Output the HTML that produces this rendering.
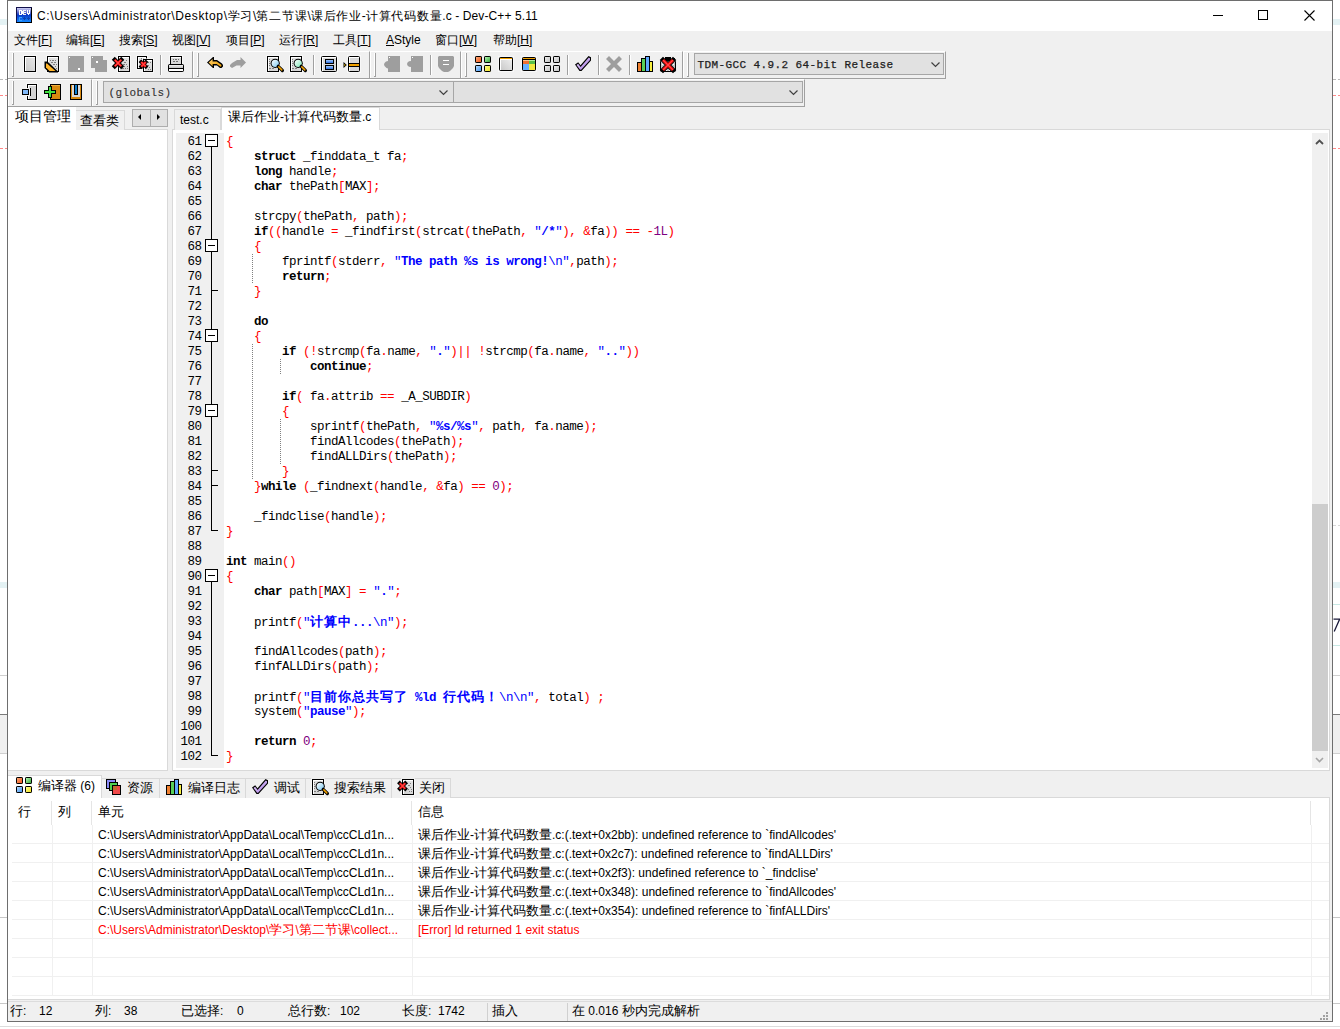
<!DOCTYPE html><html><head><meta charset="utf-8"><style>

*{margin:0;padding:0;box-sizing:border-box}
html,body{width:1340px;height:1029px;overflow:hidden;background:#fff}
body{position:relative;font-family:"Liberation Sans",sans-serif;font-size:12px;color:#000}
.t{position:absolute;white-space:pre;line-height:16px}
.ab{position:absolute}
.code{position:absolute;left:226px;white-space:pre;font-family:"Liberation Mono",monospace;font-size:12.5px;letter-spacing:-0.5px;line-height:17px;height:17px;color:#000}
.ln{position:absolute;left:176px;width:25.5px;text-align:right;white-space:pre;font-family:"Liberation Mono",monospace;font-size:12.5px;letter-spacing:-0.5px;line-height:17px;height:17px;color:#000}
.k{font-weight:bold}
.s{color:#ff0000}
.q{color:#0000ff;font-weight:bold}
.e{color:#0000ff}
.n{color:#800080}
.cj{font-size:13px;letter-spacing:1px}
.c13{font-size:13px}
.c135{font-size:13.5px}
.c12{font-size:12px}
.c125{font-size:12px;letter-spacing:0.75px}
svg{position:absolute;overflow:visible}

</style></head><body>
<div style="position:absolute;left:0px;top:19px;width:7px;height:6px;background:#e4f2f4"></div>
<div style="position:absolute;left:0px;top:79px;width:7px;height:1px;background:repeating-linear-gradient(90deg,#b8b8b8 0 3px,transparent 3px 5px)"></div>
<div style="position:absolute;left:0px;top:95px;width:7px;height:1px;background:repeating-linear-gradient(90deg,#ff8888 0 3px,transparent 3px 5px)"></div>
<div style="position:absolute;left:0px;top:148px;width:7px;height:1px;background:repeating-linear-gradient(90deg,#ff8888 0 3px,transparent 3px 5px)"></div>
<div style="position:absolute;left:0px;top:582px;width:7px;height:6px;background:#e4f2f4"></div>
<div style="position:absolute;left:0px;top:675px;width:7px;height:1px;background:#d0d0d0"></div>
<div style="position:absolute;left:0px;top:714px;width:7px;height:1px;background:#7a7a7a"></div>
<div style="position:absolute;left:0px;top:715px;width:7px;height:38px;background:#f0f0f0"></div>
<div style="position:absolute;left:0px;top:753px;width:7px;height:1px;background:#d0d0d0"></div>
<div style="position:absolute;left:0px;top:917px;width:7px;height:1px;background:#c8c8c8"></div>
<div style="position:absolute;left:0px;top:1003px;width:7px;height:1px;background:#c8c8c8"></div>
<div style="position:absolute;left:1333px;top:19px;width:7px;height:6px;background:#e4f2f4"></div>
<div style="position:absolute;left:1333px;top:79px;width:7px;height:1px;background:repeating-linear-gradient(90deg,#b8b8b8 0 3px,transparent 3px 5px)"></div>
<div style="position:absolute;left:1333px;top:95px;width:7px;height:1px;background:repeating-linear-gradient(90deg,#ff8888 0 3px,transparent 3px 5px)"></div>
<div style="position:absolute;left:1333px;top:148px;width:7px;height:1px;background:repeating-linear-gradient(90deg,#ff8888 0 3px,transparent 3px 5px)"></div>
<div style="position:absolute;left:1333px;top:582px;width:7px;height:6px;background:#e4f2f4"></div>
<div style="position:absolute;left:1333px;top:675px;width:7px;height:1px;background:#d0d0d0"></div>
<div style="position:absolute;left:1333px;top:714px;width:7px;height:1px;background:#7a7a7a"></div>
<div style="position:absolute;left:1333px;top:715px;width:7px;height:38px;background:#f0f0f0"></div>
<div style="position:absolute;left:1333px;top:753px;width:7px;height:1px;background:#d0d0d0"></div>
<div style="position:absolute;left:1333px;top:917px;width:7px;height:1px;background:#c8c8c8"></div>
<div style="position:absolute;left:1333px;top:1003px;width:7px;height:1px;background:#c8c8c8"></div>
<div style="position:absolute;left:1333px;top:525px;width:7px;height:1px;background:repeating-linear-gradient(90deg,#d8d8d8 0 3px,transparent 3px 5px)"></div>
<div style="position:absolute;left:1333px;top:604px;width:7px;height:1px;background:#c8e8e4"></div>
<div style="position:absolute;left:1333px;top:645px;width:7px;height:1px;background:#c8e8e4"></div>
<svg style="left:1333px;top:618px" width="7" height="14" viewBox="0 0 7 14"><path d="M0.5 1.2H6.6L1.2 13.5" fill="none" stroke="#1a1a3a" stroke-width="1.3"/></svg>
<div style="position:absolute;left:0px;top:1026px;width:1340px;height:1px;background:#dcdcdc"></div>
<div style="position:absolute;left:7px;top:0px;width:1326px;height:1022px;border:1px solid #6e6e6e;background:#f0f0f0"></div>
<div style="position:absolute;left:8px;top:1px;width:1324px;height:30px;background:#fff"></div>
<svg style="left:16px;top:7px" width="16" height="16" viewBox="0 0 16 16" shape-rendering="crispEdges">
<defs><linearGradient id="devg" x1="0" y1="0" x2="0" y2="1"><stop offset="0" stop-color="#d0d0f4"/><stop offset="0.35" stop-color="#5060c8"/><stop offset="0.5" stop-color="#0838c8"/><stop offset="1" stop-color="#1488ff"/></linearGradient></defs>
<rect x="0" y="0" width="16" height="16" fill="#10104a"/>
<rect x="1" y="1" width="14" height="14" fill="url(#devg)"/>
<rect x="15" y="1" width="1" height="15" fill="#000"/><rect x="0" y="15" width="16" height="1" fill="#000"/>
<path d="M3 3h3v1h1v3h-1v1h-3zM4 4v3h1v-3z" fill="#fff" fill-rule="evenodd"/>
<path d="M7 3h3v1h-2v1h2v1h-2v1h2v1h-3z" fill="#f0f0f8"/>
<path d="M11 3h1v3h1v-3h1v4h-1v1h-1v-1h-1z" fill="#fff"/>
<rect x="3" y="10" width="3" height="1" fill="#3aa0ff"/><rect x="3" y="11" width="1" height="3" fill="#3aa0ff"/><rect x="3" y="13" width="3" height="1" fill="#3aa0ff"/>
<rect x="7" y="11" width="3" height="1" fill="#0a40b0"/><rect x="8" y="10" width="1" height="3" fill="#0a40b0"/>
<rect x="11" y="11" width="3" height="1" fill="#0a40b0"/><rect x="12" y="10" width="1" height="3" fill="#0a40b0"/>
</svg>
<div class="t" style="left:37px;top:8px;font-size:12px;line-height:16px"><span style="letter-spacing:0.62px">C:\Users\Administrator\Desktop\</span><span class="c125">学习</span>\<span class="c125">第二节课</span>\<span class="c125">课后作业</span>-<span class="c125">计算代码数量</span><span style="letter-spacing:0.1px">.c - Dev-C++ 5.11</span></div>
<div style="position:absolute;left:1213px;top:15px;width:10px;height:1px;background:#000"></div>
<div style="position:absolute;left:1258px;top:10px;width:10px;height:10px;border:1px solid #000"></div>
<svg style="left:1304px;top:10px" width="11" height="11" viewBox="0 0 11 11"><path d="M0.5 0.5L10.5 10.5M10.5 0.5L0.5 10.5" stroke="#000" stroke-width="1.1"/></svg>
<div class="t" style="left:14px;top:32px;font-size:12px;line-height:16px">文件[<u>F</u>]</div>
<div class="t" style="left:66px;top:32px;font-size:12px;line-height:16px">编辑[<u>E</u>]</div>
<div class="t" style="left:119px;top:32px;font-size:12px;line-height:16px">搜索[<u>S</u>]</div>
<div class="t" style="left:172px;top:32px;font-size:12px;line-height:16px">视图[<u>V</u>]</div>
<div class="t" style="left:226px;top:32px;font-size:12px;line-height:16px">项目[<u>P</u>]</div>
<div class="t" style="left:279px;top:32px;font-size:12px;line-height:16px">运行[<u>R</u>]</div>
<div class="t" style="left:333px;top:32px;font-size:12px;line-height:16px">工具[<u>T</u>]</div>
<div class="t" style="left:386px;top:32px;font-size:12px;line-height:16px"><u>A</u>Style</div>
<div class="t" style="left:435px;top:32px;font-size:12px;line-height:16px">窗口[<u>W</u>]</div>
<div class="t" style="left:493px;top:32px;font-size:12px;line-height:16px">帮助[<u>H</u>]</div>
<div style="position:absolute;left:8px;top:51px;width:185px;height:28px;background:#f0f0f0;border-top:1px solid #fff;border-left:1px solid #fff;border-right:1px solid #a0a0a0;border-bottom:1px solid #a0a0a0"></div><div style="position:absolute;left:12px;top:53px;width:1px;height:24px;background:#fff"></div><div style="position:absolute;left:13px;top:53px;width:1px;height:24px;background:#a0a0a0"></div><div style="position:absolute;left:12px;top:76px;width:2px;height:1px;background:#a0a0a0"></div>
<div style="position:absolute;left:193px;top:51px;width:177px;height:28px;background:#f0f0f0;border-top:1px solid #fff;border-left:1px solid #fff;border-right:1px solid #a0a0a0;border-bottom:1px solid #a0a0a0"></div><div style="position:absolute;left:197px;top:53px;width:1px;height:24px;background:#fff"></div><div style="position:absolute;left:198px;top:53px;width:1px;height:24px;background:#a0a0a0"></div><div style="position:absolute;left:197px;top:76px;width:2px;height:1px;background:#a0a0a0"></div>
<div style="position:absolute;left:370px;top:51px;width:91px;height:28px;background:#f0f0f0;border-top:1px solid #fff;border-left:1px solid #fff;border-right:1px solid #a0a0a0;border-bottom:1px solid #a0a0a0"></div><div style="position:absolute;left:374px;top:53px;width:1px;height:24px;background:#fff"></div><div style="position:absolute;left:375px;top:53px;width:1px;height:24px;background:#a0a0a0"></div><div style="position:absolute;left:374px;top:76px;width:2px;height:1px;background:#a0a0a0"></div>
<div style="position:absolute;left:461px;top:51px;width:222px;height:28px;background:#f0f0f0;border-top:1px solid #fff;border-left:1px solid #fff;border-right:1px solid #a0a0a0;border-bottom:1px solid #a0a0a0"></div><div style="position:absolute;left:465px;top:53px;width:1px;height:24px;background:#fff"></div><div style="position:absolute;left:466px;top:53px;width:1px;height:24px;background:#a0a0a0"></div><div style="position:absolute;left:465px;top:76px;width:2px;height:1px;background:#a0a0a0"></div>
<div style="position:absolute;left:683px;top:51px;width:263px;height:28px;background:#f0f0f0;border-top:1px solid #fff;border-left:1px solid #fff;border-right:1px solid #a0a0a0;border-bottom:1px solid #a0a0a0"></div><div style="position:absolute;left:687px;top:53px;width:1px;height:24px;background:#fff"></div><div style="position:absolute;left:688px;top:53px;width:1px;height:24px;background:#a0a0a0"></div><div style="position:absolute;left:687px;top:76px;width:2px;height:1px;background:#a0a0a0"></div>
<div style="position:absolute;left:8px;top:79px;width:84px;height:28px;background:#f0f0f0;border-top:1px solid #fff;border-left:1px solid #fff;border-right:1px solid #a0a0a0;border-bottom:1px solid #a0a0a0"></div><div style="position:absolute;left:12px;top:81px;width:1px;height:24px;background:#fff"></div><div style="position:absolute;left:13px;top:81px;width:1px;height:24px;background:#a0a0a0"></div><div style="position:absolute;left:12px;top:104px;width:2px;height:1px;background:#a0a0a0"></div>
<div style="position:absolute;left:92px;top:79px;width:713px;height:28px;background:#f0f0f0;border-top:1px solid #fff;border-left:1px solid #fff;border-right:1px solid #a0a0a0;border-bottom:1px solid #a0a0a0"></div><div style="position:absolute;left:96px;top:81px;width:1px;height:24px;background:#fff"></div><div style="position:absolute;left:97px;top:81px;width:1px;height:24px;background:#a0a0a0"></div><div style="position:absolute;left:96px;top:104px;width:2px;height:1px;background:#a0a0a0"></div>
<div style="position:absolute;left:8px;top:78px;width:938px;height:1px;background:#a0a0a0"></div>
<div style="position:absolute;left:8px;top:106px;width:797px;height:1px;background:#a0a0a0"></div>
<div style="position:absolute;left:160px;top:55px;width:1px;height:20px;background:#a0a0a0"></div>
<div style="position:absolute;left:161px;top:55px;width:1px;height:20px;background:#fff"></div>
<div style="position:absolute;left:313px;top:55px;width:1px;height:20px;background:#a0a0a0"></div>
<div style="position:absolute;left:314px;top:55px;width:1px;height:20px;background:#fff"></div>
<div style="position:absolute;left:430px;top:55px;width:1px;height:20px;background:#a0a0a0"></div>
<div style="position:absolute;left:431px;top:55px;width:1px;height:20px;background:#fff"></div>
<div style="position:absolute;left:567px;top:55px;width:1px;height:20px;background:#a0a0a0"></div>
<div style="position:absolute;left:568px;top:55px;width:1px;height:20px;background:#fff"></div>
<div style="position:absolute;left:598px;top:55px;width:1px;height:20px;background:#a0a0a0"></div>
<div style="position:absolute;left:599px;top:55px;width:1px;height:20px;background:#fff"></div>
<div style="position:absolute;left:629px;top:55px;width:1px;height:20px;background:#a0a0a0"></div>
<div style="position:absolute;left:630px;top:55px;width:1px;height:20px;background:#fff"></div>
<svg style="left:24px;top:56px" width="12" height="16" viewBox="0 0 12 16" shape-rendering="crispEdges"><defs><linearGradient id="g1" x1="0" y1="1" x2="1" y2="0"><stop offset="0" stop-color="#c8c8c8"/><stop offset="1" stop-color="#e8e8e8"/></linearGradient></defs><rect x="-1" y="-1" width="14" height="18" fill="#fff" opacity="0.55"/><rect x="0" y="0" width="12" height="16" fill="#000" /><rect x="1" y="1" width="10" height="14" fill="url(#g1)" /><rect x="1" y="1" width="10" height="1" fill="#fff" /><rect x="1" y="1" width="1" height="14" fill="#fff" /></svg>
<svg style="left:45px;top:56px" width="14" height="16" viewBox="0 0 14 16" shape-rendering="crispEdges"><defs><linearGradient id="g2" x1="0" y1="1" x2="1" y2="0"><stop offset="0" stop-color="#cfcfcf"/><stop offset="1" stop-color="#e6e6e6"/></linearGradient></defs><rect x="1" y="-1" width="14" height="18" fill="#fff" opacity="0.55"/><rect x="2" y="0" width="12" height="16" fill="#000" /><rect x="3" y="1" width="10" height="14" fill="url(#g2)" /><rect x="3" y="1" width="10" height="1" fill="#fff" /><rect x="3" y="1" width="1" height="14" fill="#fff" /><rect x="5" y="4" width="1" height="1" fill="#606060" opacity="0.75"/><rect x="7" y="4" width="2" height="1" fill="#606060" opacity="0.75"/><rect x="10" y="4" width="1" height="1" fill="#606060" opacity="0.75"/><rect x="6" y="6" width="2" height="1" fill="#606060" opacity="0.75"/><rect x="9" y="6" width="2" height="1" fill="#606060" opacity="0.75"/><rect x="8" y="8" width="2" height="1" fill="#606060" opacity="0.75"/><rect x="11" y="8" width="1" height="1" fill="#606060" opacity="0.75"/><rect x="10" y="10" width="1" height="1" fill="#606060" opacity="0.75"/><rect x="11" y="12" width="1" height="1" fill="#606060" opacity="0.75"/><path d="M-0.5 5.5L2.5 5.5L13 15.5L13 16.5L4 16.5L-0.5 12Z" fill="#000" shape-rendering="auto"/><path d="M1 7.5L2 7.5L10.5 15L4.5 15L1 11.5Z" fill="#ffb428" shape-rendering="auto"/></svg>
<svg style="left:68px;top:56px" width="16" height="16" viewBox="0 0 16 16" shape-rendering="crispEdges"><rect x="0" y="0" width="16" height="16" fill="#9e9e9e" /><rect x="1" y="1" width="1" height="1" fill="#fff" /><rect x="10" y="12" width="2" height="2" fill="#fff" /></svg>
<svg style="left:91px;top:56px" width="16" height="16" viewBox="0 0 16 16" shape-rendering="crispEdges"><rect x="0" y="0" width="12" height="12" fill="#9e9e9e" /><rect x="4" y="4" width="12" height="12" fill="#9e9e9e" /><rect x="1" y="1" width="1" height="1" fill="#fff" /><rect x="5" y="5" width="2" height="2" fill="#fff" /></svg>
<svg style="left:113px;top:56px" width="17" height="16" viewBox="0 0 17 16" shape-rendering="crispEdges"><defs><linearGradient id="g3" x1="0" y1="1" x2="1" y2="0"><stop offset="0" stop-color="#cfcfcf"/><stop offset="1" stop-color="#e6e6e6"/></linearGradient></defs><rect x="4" y="-1" width="14" height="18" fill="#fff" opacity="0.55"/><rect x="5" y="0" width="12" height="16" fill="#000" /><rect x="6" y="1" width="10" height="14" fill="url(#g3)" /><rect x="6" y="1" width="10" height="1" fill="#fff" /><rect x="6" y="1" width="1" height="14" fill="#fff" /><rect x="10" y="4" width="1" height="1" fill="#606060" opacity="0.75"/><rect x="13" y="4" width="1" height="1" fill="#606060" opacity="0.75"/><rect x="11" y="6" width="2" height="1" fill="#606060" opacity="0.75"/><rect x="10" y="8" width="2" height="1" fill="#606060" opacity="0.75"/><rect x="13" y="8" width="1" height="1" fill="#606060" opacity="0.75"/><rect x="11" y="10" width="1" height="1" fill="#606060" opacity="0.75"/><rect x="14" y="10" width="1" height="1" fill="#606060" opacity="0.75"/><rect x="9" y="12" width="2" height="1" fill="#606060" opacity="0.75"/><rect x="12" y="12" width="1" height="1" fill="#606060" opacity="0.75"/><rect x="14" y="12" width="1" height="1" fill="#606060" opacity="0.75"/><path d="M1.75 3.75L8.25 10.25M8.25 3.75L1.75 10.25" stroke="#000" stroke-width="4.2" stroke-linecap="square" shape-rendering="auto"/><path d="M1.75 3.75L8.25 10.25M8.25 3.75L1.75 10.25" stroke="#ff1818" stroke-width="2.4" shape-rendering="auto"/><path d="M1.75 3.75L8.25 10.25M8.25 3.75L1.75 10.25" stroke="#ff9090" stroke-width="0.7" opacity="0.6" shape-rendering="auto"/></svg>
<svg style="left:137px;top:56px" width="16" height="16" viewBox="0 0 16 16" shape-rendering="crispEdges"><defs><linearGradient id="g4" x1="0" y1="1" x2="1" y2="0"><stop offset="0" stop-color="#cfcfcf"/><stop offset="1" stop-color="#e6e6e6"/></linearGradient></defs><rect x="-1" y="-1" width="12" height="15" fill="#fff" opacity="0.55"/><rect x="0" y="0" width="10" height="13" fill="#000" /><rect x="1" y="1" width="8" height="11" fill="url(#g4)" /><rect x="1" y="1" width="8" height="1" fill="#fff" /><rect x="1" y="1" width="1" height="11" fill="#fff" /><rect x="4" y="2" width="1" height="1" fill="#606060" opacity="0.75"/><rect x="6" y="2" width="1" height="1" fill="#606060" opacity="0.75"/><rect x="2" y="6" width="1" height="1" fill="#606060" opacity="0.75"/><rect x="3" y="9" width="1" height="1" fill="#606060" opacity="0.75"/><defs><linearGradient id="g5" x1="0" y1="1" x2="1" y2="0"><stop offset="0" stop-color="#cfcfcf"/><stop offset="1" stop-color="#e6e6e6"/></linearGradient></defs><rect x="5" y="2" width="12" height="15" fill="#fff" opacity="0.55"/><rect x="6" y="3" width="10" height="13" fill="#000" /><rect x="7" y="4" width="8" height="11" fill="url(#g5)" /><rect x="7" y="4" width="8" height="1" fill="#fff" /><rect x="7" y="4" width="1" height="11" fill="#fff" /><rect x="11" y="6" width="1" height="1" fill="#606060" opacity="0.75"/><rect x="13" y="6" width="1" height="1" fill="#606060" opacity="0.75"/><rect x="10" y="9" width="2" height="1" fill="#606060" opacity="0.75"/><rect x="12" y="11" width="1" height="1" fill="#606060" opacity="0.75"/><rect x="11" y="13" width="1" height="1" fill="#606060" opacity="0.75"/><rect x="13" y="13" width="1" height="1" fill="#606060" opacity="0.75"/><path d="M4.2 6.000000000000001L8.8 10.600000000000001M8.8 6.000000000000001L4.2 10.600000000000001" stroke="#000" stroke-width="3.6" stroke-linecap="square" shape-rendering="auto"/><path d="M4.2 6.000000000000001L8.8 10.600000000000001M8.8 6.000000000000001L4.2 10.600000000000001" stroke="#ff1818" stroke-width="2.4" shape-rendering="auto"/><path d="M4.2 6.000000000000001L8.8 10.600000000000001M8.8 6.000000000000001L4.2 10.600000000000001" stroke="#ff9090" stroke-width="0.7" opacity="0.6" shape-rendering="auto"/></svg>
<svg style="left:168px;top:56px" width="16" height="16" viewBox="0 0 16 16" shape-rendering="crispEdges"><defs><linearGradient id="g6" x1="0" y1="1" x2="0" y2="0"><stop offset="0" stop-color="#c0c0c0"/><stop offset="1" stop-color="#f0f0f0"/></linearGradient></defs><rect x="1" y="-1" width="14" height="11" fill="#fff" opacity="0.55"/><rect x="2" y="0" width="12" height="9" fill="#000" /><rect x="3" y="1" width="10" height="8" fill="#d8d8d8" /><rect x="3" y="1" width="10" height="1" fill="#fff" /><rect x="5" y="3" width="1" height="1" fill="#707070" /><rect x="7" y="3" width="2" height="1" fill="#707070" /><rect x="10" y="3" width="1" height="1" fill="#707070" /><rect x="5" y="5" width="2" height="1" fill="#707070" /><rect x="8" y="5" width="2" height="1" fill="#707070" /><rect x="0.5" y="8.5" width="15" height="7" rx="1" fill="#000" stroke="#000" shape-rendering="auto"/><rect x="1" y="9" width="14" height="3" fill="url(#g6)" /><rect x="1" y="13" width="14" height="2" fill="#fff" /></svg>
<svg style="left:207px;top:57px" width="17" height="12" viewBox="0 0 17 12" shape-rendering="crispEdges"><defs><linearGradient id="g7" x1="0" y1="0" x2="1" y2="1"><stop offset="0" stop-color="#ffd070"/><stop offset="1" stop-color="#f0a000"/></linearGradient></defs><path d="M0 5.5L6 0L7 0L7 3L10 3L15 6.5L16 8L16 9.5L14.5 11L13 11L10 8.5L7 8.5L7 11L6 11Z" fill="#000" shape-rendering="auto"/><path d="M1.6 5.5L5.6 2L5.6 4.5L9.6 4.5L14.2 7.8L14.5 9L13.6 9.7L9.6 7L5.6 7L5.6 9.3Z" fill="url(#g7)" shape-rendering="auto"/></svg>
<svg style="left:230px;top:57px" width="16" height="12" viewBox="0 0 16 12" shape-rendering="crispEdges"><path d="M16 5.5L10.5 0L10.5 3L7 3L2 6L0 8L0 9.5L2 11L6.5 8.5L10.5 8.5L10.5 11Z" fill="#9e9e9e" shape-rendering="auto"/></svg>
<svg style="left:267px;top:56px" width="17" height="16" viewBox="0 0 17 16" shape-rendering="crispEdges"><defs><linearGradient id="g8" x1="0" y1="1" x2="1" y2="0"><stop offset="0" stop-color="#cfcfcf"/><stop offset="1" stop-color="#e6e6e6"/></linearGradient></defs><rect x="-1" y="-1" width="14" height="18" fill="#fff" opacity="0.55"/><rect x="0" y="0" width="12" height="16" fill="#000" /><rect x="1" y="1" width="10" height="14" fill="url(#g8)" /><rect x="1" y="1" width="10" height="1" fill="#fff" /><rect x="1" y="1" width="1" height="14" fill="#fff" /><rect x="2" y="3" width="1" height="1" fill="#606060" opacity="0.75"/><rect x="2" y="5" width="1" height="1" fill="#606060" opacity="0.75"/><rect x="2" y="7" width="1" height="1" fill="#606060" opacity="0.75"/><rect x="2" y="9" width="1" height="1" fill="#606060" opacity="0.75"/><rect x="2" y="12" width="2" height="1" fill="#606060" opacity="0.75"/><rect x="5" y="12" width="2" height="1" fill="#606060" opacity="0.75"/><defs><linearGradient id="g9" x1="0" y1="0" x2="1" y2="1"><stop offset="0" stop-color="#ffffff"/><stop offset="1" stop-color="#7cc8f0"/></linearGradient></defs><circle cx="8.2" cy="7.3" r="4.6" fill="#000" shape-rendering="auto"/><circle cx="8.2" cy="7.3" r="3.6" fill="url(#g9)" shape-rendering="auto"/><path d="M11.2 10.3L15.399999999999999 14.5" stroke="#000" stroke-width="3.2" stroke-linecap="round" shape-rendering="auto"/><path d="M11.799999999999999 10.9L14.799999999999999 13.899999999999999" stroke="#f0a000" stroke-width="1.5" stroke-linecap="round" shape-rendering="auto"/></svg>
<svg style="left:290px;top:56px" width="17" height="16" viewBox="0 0 17 16" shape-rendering="crispEdges"><defs><linearGradient id="g10" x1="0" y1="1" x2="1" y2="0"><stop offset="0" stop-color="#cfcfcf"/><stop offset="1" stop-color="#e6e6e6"/></linearGradient></defs><rect x="-1" y="-1" width="14" height="18" fill="#fff" opacity="0.55"/><rect x="0" y="0" width="12" height="16" fill="#000" /><rect x="1" y="1" width="10" height="14" fill="url(#g10)" /><rect x="1" y="1" width="10" height="1" fill="#fff" /><rect x="1" y="1" width="1" height="14" fill="#fff" /><rect x="2" y="3" width="1" height="1" fill="#606060" opacity="0.75"/><rect x="2" y="5" width="1" height="1" fill="#606060" opacity="0.75"/><rect x="2" y="7" width="1" height="1" fill="#606060" opacity="0.75"/><rect x="2" y="9" width="1" height="1" fill="#606060" opacity="0.75"/><rect x="2" y="12" width="2" height="1" fill="#606060" opacity="0.75"/><rect x="5" y="12" width="2" height="1" fill="#606060" opacity="0.75"/><defs><linearGradient id="g11" x1="0" y1="0" x2="1" y2="1"><stop offset="0" stop-color="#ffffff"/><stop offset="1" stop-color="#7ce8b8"/></linearGradient></defs><circle cx="8.2" cy="7.3" r="4.6" fill="#000" shape-rendering="auto"/><circle cx="8.2" cy="7.3" r="3.6" fill="url(#g11)" shape-rendering="auto"/><path d="M11.2 10.3L15.399999999999999 14.5" stroke="#000" stroke-width="3.2" stroke-linecap="round" shape-rendering="auto"/><path d="M11.799999999999999 10.9L14.799999999999999 13.899999999999999" stroke="#f0a000" stroke-width="1.5" stroke-linecap="round" shape-rendering="auto"/></svg>
<svg style="left:321px;top:56px" width="16" height="16" viewBox="0 0 16 16" shape-rendering="crispEdges"><rect x="-1" y="-1" width="18" height="18" fill="#fff" opacity="0.55"/><defs><linearGradient id="g12" x1="0" y1="1" x2="0" y2="0"><stop offset="0" stop-color="#3070e0"/><stop offset="1" stop-color="#a0c8ff"/></linearGradient></defs><rect x="0.5" y="0.5" width="15" height="15" rx="1" fill="#d8d8d8" stroke="#000" shape-rendering="auto"/><rect x="1" y="1" width="14" height="1" fill="#fff" /><rect x="1" y="1" width="1" height="14" fill="#fff" /><rect x="4" y="3" width="9" height="5" fill="#000" /><rect x="5" y="4" width="7" height="3" fill="url(#g12)" /><rect x="4" y="9" width="9" height="5" fill="#000" /><rect x="5" y="10" width="7" height="3" fill="url(#g12)" /></svg>
<svg style="left:343px;top:56px" width="17" height="16" viewBox="0 0 17 16" shape-rendering="crispEdges"><rect x="4" y="-1" width="14" height="18" fill="#fff" opacity="0.55"/><rect x="5.5" y="0.5" width="11" height="15" rx="1" fill="#d8d8d8" stroke="#000" shape-rendering="auto"/><rect x="6" y="1" width="10" height="1" fill="#fff" /><rect x="6" y="1" width="1" height="14" fill="#fff" /><rect x="5" y="7" width="12" height="4" fill="#000" /><rect x="6" y="8" width="10" height="2" fill="#f0a000" /><path d="M0.5 6L3.8 9L0.5 12Z" fill="#000" shape-rendering="auto"/><path d="M1.3 7.8L2.6 9L1.3 10.2Z" fill="#f0c000" shape-rendering="auto"/></svg>
<svg style="left:384px;top:56px" width="16" height="16" viewBox="0 0 16 16" shape-rendering="crispEdges"><path d="M4 0L16 0L16 16L4 16L4 12.5L2.5 12L0.5 10L0 8.5L0.5 7L2 5.5L4 5Z" fill="#9e9e9e" shape-rendering="auto"/><rect x="5" y="1" width="1" height="1" fill="#fff" /></svg>
<svg style="left:407px;top:56px" width="16" height="16" viewBox="0 0 16 16" shape-rendering="crispEdges"><path d="M4 0L16 0L16 16L4 16L4 11L2 10.8L0.5 9.5L0 8L0.5 6.5L2 5.2L4 5Z" fill="#9e9e9e" shape-rendering="auto"/><rect x="5" y="1" width="1" height="1" fill="#fff" /></svg>
<svg style="left:438px;top:56px" width="16" height="16" viewBox="0 0 16 16" shape-rendering="crispEdges"><path d="M1 0L15 0L16 1L16 10L15 12L12 15L10 16L6 16L4 15L1 12L0 10L0 1Z" fill="#9e9e9e" shape-rendering="auto"/><rect x="5" y="4" width="6" height="1" fill="#fff" /><rect x="5" y="8" width="6" height="1" fill="#fff" /></svg>
<svg style="left:475px;top:56px" width="16" height="16" viewBox="0 0 16 16" shape-rendering="crispEdges"><defs><linearGradient id="g13" x1="0" y1="0" x2="1" y2="1"><stop offset="0" stop-color="#ffb080"/><stop offset="1" stop-color="#f05010"/></linearGradient></defs><rect x="0.5" y="0.5" width="6" height="6" rx="0.6" fill="url(#g13)" stroke="#000" stroke-width="1" shape-rendering="auto"/><defs><linearGradient id="g14" x1="0" y1="0" x2="1" y2="1"><stop offset="0" stop-color="#c0ffc0"/><stop offset="1" stop-color="#30a030"/></linearGradient></defs><rect x="9.5" y="0.5" width="6" height="6" rx="0.6" fill="url(#g14)" stroke="#000" stroke-width="1" shape-rendering="auto"/><defs><linearGradient id="g15" x1="0" y1="0" x2="1" y2="1"><stop offset="0" stop-color="#c0e0ff"/><stop offset="1" stop-color="#3890f0"/></linearGradient></defs><rect x="0.5" y="9.5" width="6" height="6" rx="0.6" fill="url(#g15)" stroke="#000" stroke-width="1" shape-rendering="auto"/><defs><linearGradient id="g16" x1="0" y1="0" x2="1" y2="1"><stop offset="0" stop-color="#ffff90"/><stop offset="1" stop-color="#f0e020"/></linearGradient></defs><rect x="9.5" y="9.5" width="6" height="6" rx="0.6" fill="url(#g16)" stroke="#000" stroke-width="1" shape-rendering="auto"/></svg>
<svg style="left:499px;top:57px" width="14" height="14" viewBox="0 0 14 14" shape-rendering="crispEdges"><rect x="-1" y="-1" width="16" height="16" fill="#fff" opacity="0.55"/><defs><linearGradient id="g17" x1="0" y1="1" x2="1" y2="0"><stop offset="0" stop-color="#c8c8c8"/><stop offset="1" stop-color="#eeeeee"/></linearGradient></defs><rect x="0.5" y="0.5" width="13" height="13" rx="1" fill="#000" stroke="#000" shape-rendering="auto"/><rect x="1" y="2" width="12" height="11" fill="url(#g17)" /><rect x="1" y="1" width="12" height="1" fill="#f0a000" /><rect x="1" y="2" width="12" height="1" fill="#fff" /><rect x="1" y="2" width="1" height="11" fill="#fff" /></svg>
<svg style="left:522px;top:57px" width="14" height="14" viewBox="0 0 14 14" shape-rendering="crispEdges"><rect x="-1" y="-1" width="16" height="16" fill="#fff" opacity="0.55"/><rect x="0.5" y="0.5" width="13" height="13" rx="1" fill="#000" stroke="#000" shape-rendering="auto"/><rect x="1" y="1" width="12" height="1" fill="#f0a000" /><rect x="1" y="3" width="6" height="4" fill="#f07030" /><rect x="7" y="3" width="6" height="4" fill="#58c048" /><rect x="1" y="7" width="6" height="6" fill="#68b0ff" /><rect x="7" y="7" width="6" height="6" fill="#f0e840" /><rect x="1" y="3" width="6" height="1" fill="#ffc090" /><rect x="7" y="3" width="6" height="1" fill="#b0f0a0" /></svg>
<svg style="left:544px;top:56px" width="16" height="16" viewBox="0 0 16 16" shape-rendering="crispEdges"><defs><linearGradient id="g18" x1="0" y1="0" x2="1" y2="1"><stop offset="0" stop-color="#f0f0f0"/><stop offset="1" stop-color="#c0c0c0"/></linearGradient></defs><rect x="0.5" y="0.5" width="6" height="6" rx="0.6" fill="url(#g18)" stroke="#000" stroke-width="1" shape-rendering="auto"/><defs><linearGradient id="g19" x1="0" y1="0" x2="1" y2="1"><stop offset="0" stop-color="#f0f0f0"/><stop offset="1" stop-color="#c0c0c0"/></linearGradient></defs><rect x="9.5" y="0.5" width="6" height="6" rx="0.6" fill="url(#g19)" stroke="#000" stroke-width="1" shape-rendering="auto"/><defs><linearGradient id="g20" x1="0" y1="0" x2="1" y2="1"><stop offset="0" stop-color="#f0f0f0"/><stop offset="1" stop-color="#c0c0c0"/></linearGradient></defs><rect x="0.5" y="9.5" width="6" height="6" rx="0.6" fill="url(#g20)" stroke="#000" stroke-width="1" shape-rendering="auto"/><defs><linearGradient id="g21" x1="0" y1="0" x2="1" y2="1"><stop offset="0" stop-color="#f0f0f0"/><stop offset="1" stop-color="#c0c0c0"/></linearGradient></defs><rect x="9.5" y="9.5" width="6" height="6" rx="0.6" fill="url(#g21)" stroke="#000" stroke-width="1" shape-rendering="auto"/></svg>
<svg style="left:575px;top:56px" width="16" height="16" viewBox="0 0 16 16" shape-rendering="crispEdges"><defs><linearGradient id="g22" x1="0" y1="0" x2="1" y2="1"><stop offset="0" stop-color="#f0e0ff"/><stop offset="1" stop-color="#a070e0"/></linearGradient></defs><path d="M0 8.5L3.2 6.3L5.5 9.3L13.5 0L16 1.3L16 4.5L6.5 15L4.5 15Z" fill="#000" shape-rendering="auto"/><path d="M1.5 8.9L3.1 7.8L5.6 11.1L13.8 1.5L15 2.2L15 4.1L6.1 13.8L5.1 13.8Z" fill="url(#g22)" shape-rendering="auto"/></svg>
<svg style="left:607px;top:57px" width="14" height="14" viewBox="0 0 14 14" shape-rendering="crispEdges"><path d="M2 2L12 12M12 2L2 12" stroke="#9e9e9e" stroke-width="4.2" stroke-linecap="square" shape-rendering="auto"/></svg>
<svg style="left:637px;top:56px" width="16" height="16" viewBox="0 0 16 16" shape-rendering="crispEdges"><rect x="0" y="6" width="5" height="10" fill="#000" /><rect x="1" y="7" width="3" height="8" fill="#f08030" /><rect x="4" y="2" width="5" height="14" fill="#000" /><rect x="5" y="3" width="3" height="12" fill="#58d058" /><rect x="8" y="0" width="5" height="16" fill="#000" /><rect x="9" y="1" width="3" height="14" fill="#60a8ff" /><rect x="12" y="5" width="4" height="11" fill="#000" /><rect x="13" y="6" width="2" height="9" fill="#f8f040" /></svg>
<svg style="left:660px;top:56px" width="16" height="16" viewBox="0 0 16 16" shape-rendering="crispEdges"><rect x="0.5" y="4.5" width="15" height="11" rx="1" fill="#c0c0c0" stroke="#000" shape-rendering="auto"/><rect x="5" y="1" width="6" height="4" fill="#000" /><rect x="12" y="2" width="3" height="3" fill="#000" /><rect x="2" y="8" width="1" height="1" fill="#fff" /><rect x="13" y="8" width="1" height="1" fill="#fff" /><rect x="6" y="14" width="1" height="1" fill="#fff" /><rect x="9" y="14" width="1" height="1" fill="#fff" /><path d="M3.0 4.0L13.0 14.0M13.0 4.0L3.0 14.0" stroke="#000" stroke-width="4.6" stroke-linecap="square" shape-rendering="auto"/><path d="M3.0 4.0L13.0 14.0M13.0 4.0L3.0 14.0" stroke="#ff1818" stroke-width="3.0" shape-rendering="auto"/><path d="M3.0 4.0L13.0 14.0M13.0 4.0L3.0 14.0" stroke="#ff9090" stroke-width="0.7" opacity="0.6" shape-rendering="auto"/></svg>
<svg style="left:22px;top:84px" width="15" height="16" viewBox="0 0 15 16" shape-rendering="crispEdges"><rect x="4" y="-1" width="12" height="18" fill="#fff" opacity="0.55"/><rect x="5" y="0" width="10" height="16" fill="#000" /><rect x="6" y="1" width="8" height="14" fill="#d4d4d4" /><rect x="6" y="1" width="8" height="1" fill="#fff" /><rect x="6" y="1" width="1" height="14" fill="#fff" /><rect x="5" y="4" width="3" height="8" fill="#f0f0f0" /><rect x="8" y="4" width="1" height="8" fill="#000" /><rect x="0" y="5" width="7" height="6" fill="#000" /><rect x="1" y="6" width="5" height="4" fill="#80b8f8" /></svg>
<svg style="left:45px;top:84px" width="16" height="16" viewBox="0 0 16 16" shape-rendering="crispEdges"><rect x="5" y="0" width="11" height="16" fill="#000" /><rect x="6" y="1" width="9" height="14" fill="#d88a10" /><rect x="6" y="1" width="9" height="1" fill="#f0b040" /><path d="M3 2L7 2L7 6L11 6L11 10L7 10L7 14L3 14L3 10L-1 10L-1 6L3 6Z" fill="#000" shape-rendering="auto"/><path d="M4 3L6 3L6 7L10 7L10 9L6 9L6 13L4 13L4 9L0 9L0 7L4 7Z" fill="#40e040" shape-rendering="auto"/></svg>
<svg style="left:70px;top:84px" width="12" height="16" viewBox="0 0 12 16" shape-rendering="crispEdges"><rect x="0" y="0" width="12" height="16" fill="#000" /><rect x="1" y="1" width="10" height="14" fill="#d88a10" /><rect x="2" y="1" width="8" height="12" fill="#d8d8d8" /><rect x="4" y="1" width="4" height="10" fill="#000" /><rect x="5" y="1" width="2" height="9" fill="#1080d0" /></svg>
<div style="position:absolute;left:694px;top:53px;width:250px;height:22px;background:#e1e1e1;border:1px solid #a6a6a6"></div>
<div class="t" style="left:697.5px;top:57.5px;font-family:'Liberation Mono',monospace;font-size:11px;letter-spacing:0.4px;line-height:14px;-webkit-text-stroke:0.25px #202020;color:#202020">TDM-GCC 4.9.2 64-bit Release</div>
<div style="position:absolute;left:103px;top:81px;width:351px;height:22px;background:#e1e1e1;border:1px solid #a6a6a6"></div>
<div class="t" style="left:108.5px;top:86px;font-family:'Liberation Mono',monospace;font-size:11px;letter-spacing:0.4px;line-height:14px;-webkit-text-stroke:0.1px #303030;color:#303030">(globals)</div>
<div style="position:absolute;left:453px;top:81px;width:350px;height:22px;background:#e1e1e1;border:1px solid #a6a6a6"></div>
<svg style="left:931px;top:62px" width="9" height="5" viewBox="0 0 9 5"><path d="M0.5 0.5L4.5 4.5L8.5 0.5" fill="none" stroke="#404040" stroke-width="1.2"/></svg>
<svg style="left:439px;top:90px" width="9" height="5" viewBox="0 0 9 5"><path d="M0.5 0.5L4.5 4.5L8.5 0.5" fill="none" stroke="#404040" stroke-width="1.2"/></svg>
<svg style="left:789px;top:90px" width="9" height="5" viewBox="0 0 9 5"><path d="M0.5 0.5L4.5 4.5L8.5 0.5" fill="none" stroke="#404040" stroke-width="1.2"/></svg>
<div style="position:absolute;left:8px;top:130px;width:159px;height:640px;background:#fff"></div>
<div style="position:absolute;left:167px;top:129px;width:1px;height:642px;background:#d9d9d9"></div>
<div style="position:absolute;left:8px;top:770px;width:160px;height:1px;background:#d9d9d9"></div>
<div style="position:absolute;left:8px;top:129px;width:159px;height:1px;background:#d9d9d9"></div>
<div style="position:absolute;left:75px;top:110px;width:50px;height:20px;background:#f0f0f0;border:1px solid #d9d9d9;border-bottom:none"></div>
<div style="position:absolute;left:8px;top:107px;width:68px;height:24px;background:#fff"></div>
<div class="t" style="left:15px;top:109px;font-size:12px;line-height:16px"><span class="c135">项目管理</span></div>
<div class="t" style="left:80px;top:113px;font-size:12px;line-height:16px"><span class="c13">查看类</span></div>
<div style="position:absolute;left:132px;top:109px;width:19px;height:18px;background:#e1e1e1;border:1px solid #adadad"></div>
<div style="position:absolute;left:150px;top:109px;width:18px;height:18px;background:#e1e1e1;border:1px solid #adadad"></div>
<svg style="left:138px;top:114px" width="3" height="6" viewBox="0 0 3 6" shape-rendering="crispEdges"><path d="M3 0L0 3L3 6Z" fill="#000" shape-rendering="auto"/></svg>
<svg style="left:157px;top:114px" width="3" height="6" viewBox="0 0 3 6" shape-rendering="crispEdges"><path d="M0 0L3 3L0 6Z" fill="#000" shape-rendering="auto"/></svg>
<div style="position:absolute;left:172px;top:129px;width:1158px;height:642px;background:#fff;border:1px solid #d9d9d9"></div>
<div style="position:absolute;left:174px;top:109px;width:47px;height:21px;background:#f0f0f0;border:1px solid #d9d9d9;border-bottom:none"></div>
<div class="t" style="left:180px;top:112px;font-size:12px;line-height:16px">test.c</div>
<div style="position:absolute;left:221px;top:107px;width:159px;height:23px;background:#fff;border:1px solid #d9d9d9;border-bottom:none"></div>
<div class="t" style="left:228px;top:109px;font-size:12px;line-height:16px"><span class="c13">课后作业</span>-<span class="c13">计算代码数量</span>.c</div>
<div style="position:absolute;left:176px;top:133px;width:48px;height:635px;background:#f0f0f0"></div>
<div style="position:absolute;left:1312px;top:133px;width:16px;height:635px;background:#f0f0f0"></div>
<div style="position:absolute;left:1312px;top:504px;width:16px;height:247px;background:#cdcdcd"></div>
<svg style="left:1315px;top:139px" width="9" height="6" viewBox="0 0 9 6"><path d="M1 5L4.5 1.5L8 5" fill="none" stroke="#505050" stroke-width="1.8"/></svg>
<svg style="left:1315px;top:757px" width="9" height="6" viewBox="0 0 9 6"><path d="M1 1L4.5 4.5L8 1" fill="none" stroke="#a6a6a6" stroke-width="1.6"/></svg>
<div class="ln" style="top:134px">61</div>
<div class="code" style="top:134px"><span class="s">{</span></div>
<div class="ln" style="top:149px">62</div>
<div class="code" style="top:149px">    <span class="k">struct</span> _finddata_t fa<span class="s">;</span></div>
<div class="ln" style="top:164px">63</div>
<div class="code" style="top:164px">    <span class="k">long</span> handle<span class="s">;</span></div>
<div class="ln" style="top:179px">64</div>
<div class="code" style="top:179px">    <span class="k">char</span> thePath<span class="s">[</span>MAX<span class="s">]</span><span class="s">;</span></div>
<div class="ln" style="top:194px">65</div>
<div class="ln" style="top:209px">66</div>
<div class="code" style="top:209px">    strcpy<span class="s">(</span>thePath<span class="s">,</span> path<span class="s">)</span><span class="s">;</span></div>
<div class="ln" style="top:224px">67</div>
<div class="code" style="top:224px">    <span class="k">if</span><span class="s">(</span><span class="s">(</span>handle <span class="s">=</span> _findfirst<span class="s">(</span>strcat<span class="s">(</span>thePath<span class="s">,</span> <span class="e">"</span><span class="q">/*</span><span class="e">"</span><span class="s">)</span><span class="s">,</span> <span class="s">&amp;</span>fa<span class="s">)</span><span class="s">)</span> <span class="s">=</span><span class="s">=</span> <span class="s">-</span><span class="n">1L</span><span class="s">)</span></div>
<div class="ln" style="top:239px">68</div>
<div class="code" style="top:239px">    <span class="s">{</span></div>
<div class="ln" style="top:254px">69</div>
<div class="code" style="top:254px">        fprintf<span class="s">(</span>stderr<span class="s">,</span> <span class="e">"</span><span class="q">The path %s is wrong!</span><span class="e">\n</span><span class="e">"</span><span class="s">,</span>path<span class="s">)</span><span class="s">;</span></div>
<div class="ln" style="top:269px">70</div>
<div class="code" style="top:269px">        <span class="k">return</span><span class="s">;</span></div>
<div class="ln" style="top:284px">71</div>
<div class="code" style="top:284px">    <span class="s">}</span></div>
<div class="ln" style="top:299px">72</div>
<div class="ln" style="top:314px">73</div>
<div class="code" style="top:314px">    <span class="k">do</span></div>
<div class="ln" style="top:329px">74</div>
<div class="code" style="top:329px">    <span class="s">{</span></div>
<div class="ln" style="top:344px">75</div>
<div class="code" style="top:344px">        <span class="k">if</span> <span class="s">(</span><span class="s">!</span>strcmp<span class="s">(</span>fa<span class="s">.</span>name<span class="s">,</span> <span class="e">"</span><span class="q">.</span><span class="e">"</span><span class="s">)</span><span class="s">|</span><span class="s">|</span> <span class="s">!</span>strcmp<span class="s">(</span>fa<span class="s">.</span>name<span class="s">,</span> <span class="e">"</span><span class="q">..</span><span class="e">"</span><span class="s">)</span><span class="s">)</span></div>
<div class="ln" style="top:359px">76</div>
<div class="code" style="top:359px">            <span class="k">continue</span><span class="s">;</span></div>
<div class="ln" style="top:374px">77</div>
<div class="ln" style="top:389px">78</div>
<div class="code" style="top:389px">        <span class="k">if</span><span class="s">(</span> fa<span class="s">.</span>attrib <span class="s">=</span><span class="s">=</span> _A_SUBDIR<span class="s">)</span></div>
<div class="ln" style="top:404px">79</div>
<div class="code" style="top:404px">        <span class="s">{</span></div>
<div class="ln" style="top:419px">80</div>
<div class="code" style="top:419px">            sprintf<span class="s">(</span>thePath<span class="s">,</span> <span class="e">"</span><span class="q">%s/%s</span><span class="e">"</span><span class="s">,</span> path<span class="s">,</span> fa<span class="s">.</span>name<span class="s">)</span><span class="s">;</span></div>
<div class="ln" style="top:434px">81</div>
<div class="code" style="top:434px">            findAllcodes<span class="s">(</span>thePath<span class="s">)</span><span class="s">;</span></div>
<div class="ln" style="top:449px">82</div>
<div class="code" style="top:449px">            findALLDirs<span class="s">(</span>thePath<span class="s">)</span><span class="s">;</span></div>
<div class="ln" style="top:464px">83</div>
<div class="code" style="top:464px">        <span class="s">}</span></div>
<div class="ln" style="top:479px">84</div>
<div class="code" style="top:479px">    <span class="s">}</span><span class="k">while</span> <span class="s">(</span>_findnext<span class="s">(</span>handle<span class="s">,</span> <span class="s">&amp;</span>fa<span class="s">)</span> <span class="s">=</span><span class="s">=</span> <span class="n">0</span><span class="s">)</span><span class="s">;</span></div>
<div class="ln" style="top:494px">85</div>
<div class="ln" style="top:509px">86</div>
<div class="code" style="top:509px">    _findclise<span class="s">(</span>handle<span class="s">)</span><span class="s">;</span></div>
<div class="ln" style="top:524px">87</div>
<div class="code" style="top:524px"><span class="s">}</span></div>
<div class="ln" style="top:539px">88</div>
<div class="ln" style="top:554px">89</div>
<div class="code" style="top:554px"><span class="k">int</span> main<span class="s">(</span><span class="s">)</span></div>
<div class="ln" style="top:569px">90</div>
<div class="code" style="top:569px"><span class="s">{</span></div>
<div class="ln" style="top:584px">91</div>
<div class="code" style="top:584px">    <span class="k">char</span> path<span class="s">[</span>MAX<span class="s">]</span> <span class="s">=</span> <span class="e">"</span><span class="q">.</span><span class="e">"</span><span class="s">;</span></div>
<div class="ln" style="top:599px">92</div>
<div class="ln" style="top:614px">93</div>
<div class="code" style="top:614px">    printf<span class="s">(</span><span class="e">"</span><span class="q"><span class="cj">计算中</span>...</span><span class="e">\n</span><span class="e">"</span><span class="s">)</span><span class="s">;</span></div>
<div class="ln" style="top:629px">94</div>
<div class="ln" style="top:644px">95</div>
<div class="code" style="top:644px">    findAllcodes<span class="s">(</span>path<span class="s">)</span><span class="s">;</span></div>
<div class="ln" style="top:659px">96</div>
<div class="code" style="top:659px">    finfALLDirs<span class="s">(</span>path<span class="s">)</span><span class="s">;</span></div>
<div class="ln" style="top:674px">97</div>
<div class="ln" style="top:689px">98</div>
<div class="code" style="top:689px">    printf<span class="s">(</span><span class="e">"</span><span class="q"><span class="cj">目前你总共写了</span> %ld <span class="cj">行代码！</span></span><span class="e">\n</span><span class="e">\n</span><span class="e">"</span><span class="s">,</span> total<span class="s">)</span> <span class="s">;</span></div>
<div class="ln" style="top:704px">99</div>
<div class="code" style="top:704px">    system<span class="s">(</span><span class="e">"</span><span class="q">pause</span><span class="e">"</span><span class="s">)</span><span class="s">;</span></div>
<div class="ln" style="top:719px">100</div>
<div class="ln" style="top:734px">101</div>
<div class="code" style="top:734px">    <span class="k">return</span> <span class="n">0</span><span class="s">;</span></div>
<div class="ln" style="top:749px">102</div>
<div class="code" style="top:749px"><span class="s">}</span></div>
<div style="position:absolute;left:211px;top:147px;width:1px;height:384px;background:#000"></div>
<div style="position:absolute;left:211px;top:530px;width:7px;height:1px;background:#000"></div>
<div style="position:absolute;left:211px;top:290px;width:7px;height:1px;background:#000"></div>
<div style="position:absolute;left:211px;top:470px;width:7px;height:1px;background:#000"></div>
<div style="position:absolute;left:211px;top:485px;width:7px;height:1px;background:#000"></div>
<div style="position:absolute;left:211px;top:582px;width:1px;height:174px;background:#000"></div>
<div style="position:absolute;left:211px;top:755px;width:7px;height:1px;background:#000"></div>
<div style="position:absolute;left:205px;top:134px;width:13px;height:13px;border:1px solid #000;background:#fff"></div><div style="position:absolute;left:208px;top:140px;width:7px;height:1px;background:#000"></div>
<div style="position:absolute;left:205px;top:239px;width:13px;height:13px;border:1px solid #000;background:#fff"></div><div style="position:absolute;left:208px;top:245px;width:7px;height:1px;background:#000"></div>
<div style="position:absolute;left:205px;top:329px;width:13px;height:13px;border:1px solid #000;background:#fff"></div><div style="position:absolute;left:208px;top:335px;width:7px;height:1px;background:#000"></div>
<div style="position:absolute;left:205px;top:404px;width:13px;height:13px;border:1px solid #000;background:#fff"></div><div style="position:absolute;left:208px;top:410px;width:7px;height:1px;background:#000"></div>
<div style="position:absolute;left:205px;top:569px;width:13px;height:13px;border:1px solid #000;background:#fff"></div><div style="position:absolute;left:208px;top:575px;width:7px;height:1px;background:#000"></div>
<div style="position:absolute;left:252px;top:254px;width:1px;height:30px;background:repeating-linear-gradient(180deg,#808080 0 1px,transparent 1px 2px)"></div>
<div style="position:absolute;left:252px;top:344px;width:1px;height:135px;background:repeating-linear-gradient(180deg,#808080 0 1px,transparent 1px 2px)"></div>
<div style="position:absolute;left:280px;top:359px;width:1px;height:15px;background:repeating-linear-gradient(180deg,#808080 0 1px,transparent 1px 2px)"></div>
<div style="position:absolute;left:280px;top:419px;width:1px;height:45px;background:repeating-linear-gradient(180deg,#808080 0 1px,transparent 1px 2px)"></div>
<div style="position:absolute;left:8px;top:797px;width:1322px;height:203px;background:#fff;border:1px solid #d9d9d9;border-left:none"></div>
<div style="position:absolute;left:101px;top:778px;width:59px;height:20px;background:#f0f0f0;border:1px solid #d9d9d9;border-bottom:none"></div>
<div class="t" style="left:127px;top:780px;font-size:12px;line-height:16px"><span class="c13">资源</span></div>
<div style="position:absolute;left:159px;top:778px;width:87px;height:20px;background:#f0f0f0;border:1px solid #d9d9d9;border-bottom:none"></div>
<div class="t" style="left:188px;top:780px;font-size:12px;line-height:16px"><span class="c13">编译日志</span></div>
<div style="position:absolute;left:245px;top:778px;width:61px;height:20px;background:#f0f0f0;border:1px solid #d9d9d9;border-bottom:none"></div>
<div class="t" style="left:274px;top:780px;font-size:12px;line-height:16px"><span class="c13">调试</span></div>
<div style="position:absolute;left:305px;top:778px;width:87px;height:20px;background:#f0f0f0;border:1px solid #d9d9d9;border-bottom:none"></div>
<div class="t" style="left:334px;top:780px;font-size:12px;line-height:16px"><span class="c13">搜索结果</span></div>
<div style="position:absolute;left:391px;top:778px;width:60px;height:20px;background:#f0f0f0;border:1px solid #d9d9d9;border-bottom:none"></div>
<div class="t" style="left:419px;top:780px;font-size:12px;line-height:16px"><span class="c13">关闭</span></div>
<div style="position:absolute;left:8px;top:775px;width:94px;height:23px;background:#fff;border-top:1px solid #d9d9d9;border-right:1px solid #d9d9d9"></div>
<div class="t" style="left:38px;top:778px;font-size:12px;line-height:16px"><span class="c13">编译器</span> (6)</div>
<svg style="left:16px;top:777px" width="16" height="16" viewBox="0 0 16 16" shape-rendering="crispEdges"><defs><linearGradient id="g23" x1="0" y1="0" x2="1" y2="1"><stop offset="0" stop-color="#ffb080"/><stop offset="1" stop-color="#f05010"/></linearGradient></defs><rect x="0.5" y="0.5" width="6" height="6" rx="0.6" fill="url(#g23)" stroke="#000" stroke-width="1" shape-rendering="auto"/><defs><linearGradient id="g24" x1="0" y1="0" x2="1" y2="1"><stop offset="0" stop-color="#c0ffc0"/><stop offset="1" stop-color="#30a030"/></linearGradient></defs><rect x="9.5" y="0.5" width="6" height="6" rx="0.6" fill="url(#g24)" stroke="#000" stroke-width="1" shape-rendering="auto"/><defs><linearGradient id="g25" x1="0" y1="0" x2="1" y2="1"><stop offset="0" stop-color="#c0e0ff"/><stop offset="1" stop-color="#3890f0"/></linearGradient></defs><rect x="0.5" y="9.5" width="6" height="6" rx="0.6" fill="url(#g25)" stroke="#000" stroke-width="1" shape-rendering="auto"/><defs><linearGradient id="g26" x1="0" y1="0" x2="1" y2="1"><stop offset="0" stop-color="#ffff90"/><stop offset="1" stop-color="#f0e020"/></linearGradient></defs><rect x="9.5" y="9.5" width="6" height="6" rx="0.6" fill="url(#g26)" stroke="#000" stroke-width="1" shape-rendering="auto"/></svg>
<svg style="left:106px;top:779px" width="15" height="16" viewBox="0 0 15 16" shape-rendering="crispEdges"><rect x="0" y="0" width="10" height="10" fill="#000" /><rect x="1" y="1" width="8" height="8" fill="#8a8af8" /><rect x="3" y="3" width="9" height="9" fill="#000" /><rect x="4" y="4" width="7" height="7" fill="#50d050" /><rect x="6" y="6" width="9" height="10" fill="#000" /><rect x="7" y="7" width="7" height="8" fill="#f04848" /><rect x="7" y="7" width="4" height="4" fill="#c06a30" /></svg>
<svg style="left:166px;top:779px" width="16" height="16" viewBox="0 0 16 16" shape-rendering="crispEdges"><rect x="0" y="6" width="5" height="10" fill="#000" /><rect x="1" y="7" width="3" height="8" fill="#f08030" /><rect x="4" y="2" width="5" height="14" fill="#000" /><rect x="5" y="3" width="3" height="12" fill="#58d058" /><rect x="8" y="0" width="5" height="16" fill="#000" /><rect x="9" y="1" width="3" height="14" fill="#60a8ff" /><rect x="12" y="5" width="4" height="11" fill="#000" /><rect x="13" y="6" width="2" height="9" fill="#f8f040" /></svg>
<svg style="left:252px;top:779px" width="16" height="16" viewBox="0 0 16 16" shape-rendering="crispEdges"><defs><linearGradient id="g27" x1="0" y1="0" x2="1" y2="1"><stop offset="0" stop-color="#f0e0ff"/><stop offset="1" stop-color="#a070e0"/></linearGradient></defs><path d="M0 8.5L3.2 6.3L5.5 9.3L13.5 0L16 1.3L16 4.5L6.5 15L4.5 15Z" fill="#000" shape-rendering="auto"/><path d="M1.5 8.9L3.1 7.8L5.6 11.1L13.8 1.5L15 2.2L15 4.1L6.1 13.8L5.1 13.8Z" fill="url(#g27)" shape-rendering="auto"/></svg>
<svg style="left:312px;top:779px" width="17" height="16" viewBox="0 0 17 16" shape-rendering="crispEdges"><defs><linearGradient id="g28" x1="0" y1="1" x2="1" y2="0"><stop offset="0" stop-color="#cfcfcf"/><stop offset="1" stop-color="#e6e6e6"/></linearGradient></defs><rect x="-1" y="-1" width="14" height="18" fill="#fff" opacity="0.55"/><rect x="0" y="0" width="12" height="16" fill="#000" /><rect x="1" y="1" width="10" height="14" fill="url(#g28)" /><rect x="1" y="1" width="10" height="1" fill="#fff" /><rect x="1" y="1" width="1" height="14" fill="#fff" /><rect x="2" y="3" width="1" height="1" fill="#606060" opacity="0.75"/><rect x="2" y="5" width="1" height="1" fill="#606060" opacity="0.75"/><rect x="2" y="7" width="1" height="1" fill="#606060" opacity="0.75"/><rect x="2" y="9" width="1" height="1" fill="#606060" opacity="0.75"/><rect x="2" y="12" width="2" height="1" fill="#606060" opacity="0.75"/><rect x="5" y="12" width="2" height="1" fill="#606060" opacity="0.75"/><defs><linearGradient id="g29" x1="0" y1="0" x2="1" y2="1"><stop offset="0" stop-color="#ffffff"/><stop offset="1" stop-color="#7cc8f0"/></linearGradient></defs><circle cx="8.2" cy="7.3" r="4.6" fill="#000" shape-rendering="auto"/><circle cx="8.2" cy="7.3" r="3.6" fill="url(#g29)" shape-rendering="auto"/><path d="M11.2 10.3L15.399999999999999 14.5" stroke="#000" stroke-width="3.2" stroke-linecap="round" shape-rendering="auto"/><path d="M11.799999999999999 10.9L14.799999999999999 13.899999999999999" stroke="#f0a000" stroke-width="1.5" stroke-linecap="round" shape-rendering="auto"/></svg>
<svg style="left:398px;top:779px" width="16" height="16" viewBox="0 0 16 16" shape-rendering="crispEdges"><defs><linearGradient id="g30" x1="0" y1="1" x2="1" y2="0"><stop offset="0" stop-color="#cfcfcf"/><stop offset="1" stop-color="#e6e6e6"/></linearGradient></defs><rect x="3" y="-1" width="14" height="18" fill="#fff" opacity="0.55"/><rect x="4" y="0" width="12" height="16" fill="#000" /><rect x="5" y="1" width="10" height="14" fill="url(#g30)" /><rect x="5" y="1" width="10" height="1" fill="#fff" /><rect x="5" y="1" width="1" height="14" fill="#fff" /><rect x="9" y="4" width="1" height="1" fill="#606060" opacity="0.75"/><rect x="12" y="4" width="1" height="1" fill="#606060" opacity="0.75"/><rect x="10" y="6" width="2" height="1" fill="#606060" opacity="0.75"/><rect x="12" y="8" width="1" height="1" fill="#606060" opacity="0.75"/><rect x="10" y="10" width="1" height="1" fill="#606060" opacity="0.75"/><rect x="13" y="10" width="1" height="1" fill="#606060" opacity="0.75"/><rect x="11" y="12" width="1" height="1" fill="#606060" opacity="0.75"/><rect x="13" y="12" width="1" height="1" fill="#606060" opacity="0.75"/><path d="M1.75 4.25L7.25 9.75M7.25 4.25L1.75 9.75" stroke="#000" stroke-width="3.8" stroke-linecap="square" shape-rendering="auto"/><path d="M1.75 4.25L7.25 9.75M7.25 4.25L1.75 9.75" stroke="#ff1818" stroke-width="2.2" shape-rendering="auto"/><path d="M1.75 4.25L7.25 9.75M7.25 4.25L1.75 9.75" stroke="#ff9090" stroke-width="0.7" opacity="0.6" shape-rendering="auto"/></svg>
<div class="t" style="left:18px;top:804px;font-size:12px;line-height:16px"><span class="c13">行</span></div>
<div class="t" style="left:58px;top:804px;font-size:12px;line-height:16px"><span class="c13">列</span></div>
<div class="t" style="left:98px;top:804px;font-size:12px;line-height:16px"><span class="c13">单元</span></div>
<div class="t" style="left:418px;top:804px;font-size:12px;line-height:16px"><span class="c13">信息</span></div>
<div style="position:absolute;left:51px;top:801px;width:1px;height:24px;background:#e5e5e5"></div>
<div style="position:absolute;left:91px;top:801px;width:1px;height:24px;background:#e5e5e5"></div>
<div style="position:absolute;left:411px;top:801px;width:1px;height:24px;background:#e5e5e5"></div>
<div style="position:absolute;left:1310px;top:801px;width:1px;height:24px;background:#e5e5e5"></div>
<div style="position:absolute;left:12px;top:843px;width:1317px;height:1px;background:#f0f0f0"></div>
<div style="position:absolute;left:12px;top:862px;width:1317px;height:1px;background:#f0f0f0"></div>
<div style="position:absolute;left:12px;top:881px;width:1317px;height:1px;background:#f0f0f0"></div>
<div style="position:absolute;left:12px;top:900px;width:1317px;height:1px;background:#f0f0f0"></div>
<div style="position:absolute;left:12px;top:919px;width:1317px;height:1px;background:#f0f0f0"></div>
<div style="position:absolute;left:12px;top:938px;width:1317px;height:1px;background:#f0f0f0"></div>
<div style="position:absolute;left:12px;top:957px;width:1317px;height:1px;background:#f0f0f0"></div>
<div style="position:absolute;left:12px;top:976px;width:1317px;height:1px;background:#f0f0f0"></div>
<div style="position:absolute;left:12px;top:995px;width:1317px;height:1px;background:#f0f0f0"></div>
<div style="position:absolute;left:52px;top:825px;width:1px;height:171px;background:#f0f0f0"></div>
<div style="position:absolute;left:92px;top:825px;width:1px;height:171px;background:#f0f0f0"></div>
<div style="position:absolute;left:412px;top:825px;width:1px;height:171px;background:#f0f0f0"></div>
<div style="position:absolute;left:1311px;top:825px;width:1px;height:171px;background:#f0f0f0"></div>
<div class="t" style="left:98px;top:827px;font-size:12px;line-height:16px">C:\Users\Administrator\AppData\Local\Temp\ccCLd1n...</div>
<div class="t" style="left:418px;top:827px;font-size:12px;line-height:16px"><span class="c13">课后作业</span>-<span class="c13">计算代码数量</span>.c:(.text+0x2bb): undefined reference to `findAllcodes&#x27;</div>
<div class="t" style="left:98px;top:846px;font-size:12px;line-height:16px">C:\Users\Administrator\AppData\Local\Temp\ccCLd1n...</div>
<div class="t" style="left:418px;top:846px;font-size:12px;line-height:16px"><span class="c13">课后作业</span>-<span class="c13">计算代码数量</span>.c:(.text+0x2c7): undefined reference to `findALLDirs&#x27;</div>
<div class="t" style="left:98px;top:865px;font-size:12px;line-height:16px">C:\Users\Administrator\AppData\Local\Temp\ccCLd1n...</div>
<div class="t" style="left:418px;top:865px;font-size:12px;line-height:16px"><span class="c13">课后作业</span>-<span class="c13">计算代码数量</span>.c:(.text+0x2f3): undefined reference to `_findclise&#x27;</div>
<div class="t" style="left:98px;top:884px;font-size:12px;line-height:16px">C:\Users\Administrator\AppData\Local\Temp\ccCLd1n...</div>
<div class="t" style="left:418px;top:884px;font-size:12px;line-height:16px"><span class="c13">课后作业</span>-<span class="c13">计算代码数量</span>.c:(.text+0x348): undefined reference to `findAllcodes&#x27;</div>
<div class="t" style="left:98px;top:903px;font-size:12px;line-height:16px">C:\Users\Administrator\AppData\Local\Temp\ccCLd1n...</div>
<div class="t" style="left:418px;top:903px;font-size:12px;line-height:16px"><span class="c13">课后作业</span>-<span class="c13">计算代码数量</span>.c:(.text+0x354): undefined reference to `finfALLDirs&#x27;</div>
<div class="t" style="left:98px;top:922px;font-size:12px;line-height:16px;color:#ff0000">C:\Users\Administrator\Desktop\<span class="c13">学习</span>\<span class="c13">第二节课</span>\collect...</div>
<div class="t" style="left:418px;top:922px;font-size:12px;line-height:16px;color:#ff0000">[Error] ld returned 1 exit status</div>
<div style="position:absolute;left:8px;top:1001px;width:1324px;height:1px;background:#dcdcdc"></div>
<div class="t" style="left:10px;top:1003px;font-size:12px;line-height:16px"><span class="c13">行</span>:</div>
<div class="t" style="left:39px;top:1003px;font-size:12px;line-height:16px">12</div>
<div class="t" style="left:95px;top:1003px;font-size:12px;line-height:16px"><span class="c13">列</span>:</div>
<div class="t" style="left:124px;top:1003px;font-size:12px;line-height:16px">38</div>
<div class="t" style="left:181px;top:1003px;font-size:12px;line-height:16px"><span class="c13">已选择</span>:</div>
<div class="t" style="left:237px;top:1003px;font-size:12px;line-height:16px">0</div>
<div class="t" style="left:288px;top:1003px;font-size:12px;line-height:16px"><span class="c13">总行数</span>:</div>
<div class="t" style="left:340px;top:1003px;font-size:12px;line-height:16px">102</div>
<div class="t" style="left:402px;top:1003px;font-size:12px;line-height:16px"><span class="c13">长度</span>:</div>
<div class="t" style="left:438px;top:1003px;font-size:12px;line-height:16px">1742</div>
<div class="t" style="left:492px;top:1003px;font-size:12px;line-height:16px"><span class="c13">插入</span></div>
<div class="t" style="left:572px;top:1003px;font-size:12px;line-height:16px"><span class="c13">在</span> 0.016 <span class="c13">秒内完成解析</span></div>
<div style="position:absolute;left:487px;top:1003px;width:1px;height:18px;background:#d0d0d0"></div>
<div style="position:absolute;left:567px;top:1003px;width:1px;height:18px;background:#d0d0d0"></div>
<div style="position:absolute;left:1326px;top:1012px;width:2px;height:2px;background:#a0a0a0"></div>
<div style="position:absolute;left:1326px;top:1015px;width:2px;height:2px;background:#a0a0a0"></div>
<div style="position:absolute;left:1323px;top:1015px;width:2px;height:2px;background:#a0a0a0"></div>
<div style="position:absolute;left:1326px;top:1018px;width:2px;height:2px;background:#a0a0a0"></div>
<div style="position:absolute;left:1323px;top:1018px;width:2px;height:2px;background:#a0a0a0"></div>
<div style="position:absolute;left:1320px;top:1018px;width:2px;height:2px;background:#a0a0a0"></div>
</body></html>
